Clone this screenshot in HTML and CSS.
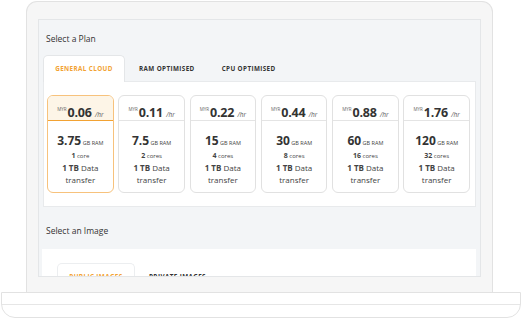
FILE: index.html
```html
<!DOCTYPE html>
<html lang="en">
<head>
  <meta charset="UTF-8" />
  <meta name="viewport" content="width=device-width, initial-scale=1.0" />
  <title>Select a Plan</title>
  <link rel="stylesheet" href="styles.css">
</head>
<body>
  <div class="laptop">
    <div class="frame">
      <div class="screen">
        <h2 class="section-title">Select a Plan</h2>
        <div class="tabs">
          <div class="tab active">General Cloud</div>
          <div class="tab">RAM Optimised</div>
          <div class="tab">CPU Optimised</div>
        </div>
        <div class="panel">
          <div class="plans">
            <div class="plan selected">
              <div class="plan-head"><span class="cur">MYR</span><strong>0.06</strong> <span class="per">/hr</span></div>
              <div class="plan-body">
                <p class="ram"><strong>3.75</strong> GB RAM</p>
                <p class="cores"><strong>1</strong> core</p>
                <p class="data"><strong>1 TB</strong> Data<br>transfer</p>
              </div>
            </div>
            <div class="plan">
              <div class="plan-head"><span class="cur">MYR</span><strong>0.11</strong> <span class="per">/hr</span></div>
              <div class="plan-body">
                <p class="ram"><strong>7.5</strong> GB RAM</p>
                <p class="cores"><strong>2</strong> cores</p>
                <p class="data"><strong>1 TB</strong> Data<br>transfer</p>
              </div>
            </div>
            <div class="plan">
              <div class="plan-head"><span class="cur">MYR</span><strong>0.22</strong> <span class="per">/hr</span></div>
              <div class="plan-body">
                <p class="ram"><strong>15</strong> GB RAM</p>
                <p class="cores"><strong>4</strong> cores</p>
                <p class="data"><strong>1 TB</strong> Data<br>transfer</p>
              </div>
            </div>
            <div class="plan">
              <div class="plan-head"><span class="cur">MYR</span><strong>0.44</strong> <span class="per">/hr</span></div>
              <div class="plan-body">
                <p class="ram"><strong>30</strong> GB RAM</p>
                <p class="cores"><strong>8</strong> cores</p>
                <p class="data"><strong>1 TB</strong> Data<br>transfer</p>
              </div>
            </div>
            <div class="plan">
              <div class="plan-head"><span class="cur">MYR</span><strong>0.88</strong> <span class="per">/hr</span></div>
              <div class="plan-body">
                <p class="ram"><strong>60</strong> GB RAM</p>
                <p class="cores"><strong>16</strong> cores</p>
                <p class="data"><strong>1 TB</strong> Data<br>transfer</p>
              </div>
            </div>
            <div class="plan">
              <div class="plan-head"><span class="cur">MYR</span><strong>1.76</strong> <span class="per">/hr</span></div>
              <div class="plan-body">
                <p class="ram"><strong>120</strong> GB RAM</p>
                <p class="cores"><strong>32</strong> cores</p>
                <p class="data"><strong>1 TB</strong> Data<br>transfer</p>
              </div>
            </div>
          </div>
        </div>
        <h2 class="section-title image-title">Select an Image</h2>
        <div class="image-panel">
          <div class="tabs image-tabs">
            <div class="tab active">Public Images</div>
            <div class="tab">Private Images</div>
          </div>
        </div>
      </div>
    </div>
    <div class="base">
      <div class="base-lip"></div>
    </div>
  </div>
</body>
</html>
```

FILE: styles.css
```css
* {
  box-sizing: border-box;
}
body {
  margin: 0;
  background: #fff;
  font-family: 'Open Sans', 'Liberation Sans', sans-serif;
  color: #333;
}
.laptop {
  padding-top: 1px;
  width: 522px;
}
.frame {
  margin-left: 26px;
  width: 467px;
  height: 291px;
  border: 1px solid #e2e2e2;
  border-bottom: none;
  border-radius: 11px 11px 0 0;
  background: #f6f6f6;
  padding: 17px 11px 15px;
}
.screen {
  height: 258px;
  border: 1px solid #e4e6e8;
  background: #f3f5f7;
  overflow: hidden;
  padding: 0 4px 0 4px;
}
.section-title {
  margin: 0;
  font-size: 8.5px;
  font-weight: 400;
  color: #333;
  padding: 13px 0 0 3px;
  line-height: 12px;
}
.tabs {
  display: flex;
  margin-top: 10px;
  height: 26px;
  position: relative;
  z-index: 1;
}
.tab {
  font-size: 6.3px;
  font-weight: 700;
  letter-spacing: 0.4px;
  text-transform: uppercase;
  color: #333;
  padding: 0 12px 0 13px;
  line-height: 26px;
  border: 1px solid transparent;
  border-bottom: none;
  border-radius: 5px 5px 0 0;
}
.tab.active {
  color: #f2a233;
  background: #fff;
  border-color: #e4e6e8;
  width: 82px;
  text-align: center;
  padding: 0;
  height: 27px;
}
.panel {
  background: #fff;
  border: 1px solid #e8eaec;
  height: 126px;
  padding: 13px 5px 0 3px;
}
.plans {
  display: grid;
  grid-template-columns: repeat(6, 1fr);
  gap: 4.6px;
}
.plan {
  border: 1px solid #e1e1e1;
  border-radius: 6px;
  height: 98px;
  text-align: center;
  overflow: hidden;
}
.plan.selected {
  border-color: #f7c27c;
}
.plan-head {
  height: 25px;
  border-bottom: 1px solid #e4e4e4;
  padding-top: 6px;
  font-size: 12.5px;
  line-height: 15px;
  white-space: nowrap;
}
.plan.selected .plan-head {
  background: #fdf5e7;
  border-bottom-color: #f2a233;
}
.plan-head strong {
  font-weight: 700;
  color: #333;
  letter-spacing: -0.2px;
}
.cur {
  font-size: 4.5px;
  color: #666;
  vertical-align: 6px;
  margin-right: 1px;
}
.per {
  font-size: 6.5px;
  font-style: italic;
  color: #555;
}
.plan-body {
  padding-top: 13px;
  color: #444;
}
.plan-body p {
  margin: 0;
}
.ram {
  font-size: 5.5px;
  line-height: 14px;
  text-transform: uppercase;
}
.ram strong {
  font-size: 12px;
  color: #333;
}
.cores {
  font-size: 6px;
  line-height: 12px;
}
.cores strong {
  font-size: 7px;
}
.data {
  font-size: 8px;
  line-height: 12px;
}
.image-title {
  padding-top: 18px;
}
.image-panel {
  background: #fff;
  margin-top: 12px;
  margin-left: -1px;
  height: 40px;
  padding: 14px 0 0 15px;
}
.image-tabs {
  margin-top: 0;
}
.image-tabs .tab {
  line-height: 25px;
}
.image-tabs .tab.active {
  width: 78px;
  border-color: #eceef0;
}
.base {
  width: 520px;
  margin-left: 1px;
  height: 26px;
  border: 1px solid #e2e2e2;
  border-radius: 0 0 14px 14px;
  background: #fff;
  padding-top: 11px;
}
.base-lip {
  border-top: 1px solid #e6e6e6;
}
```
